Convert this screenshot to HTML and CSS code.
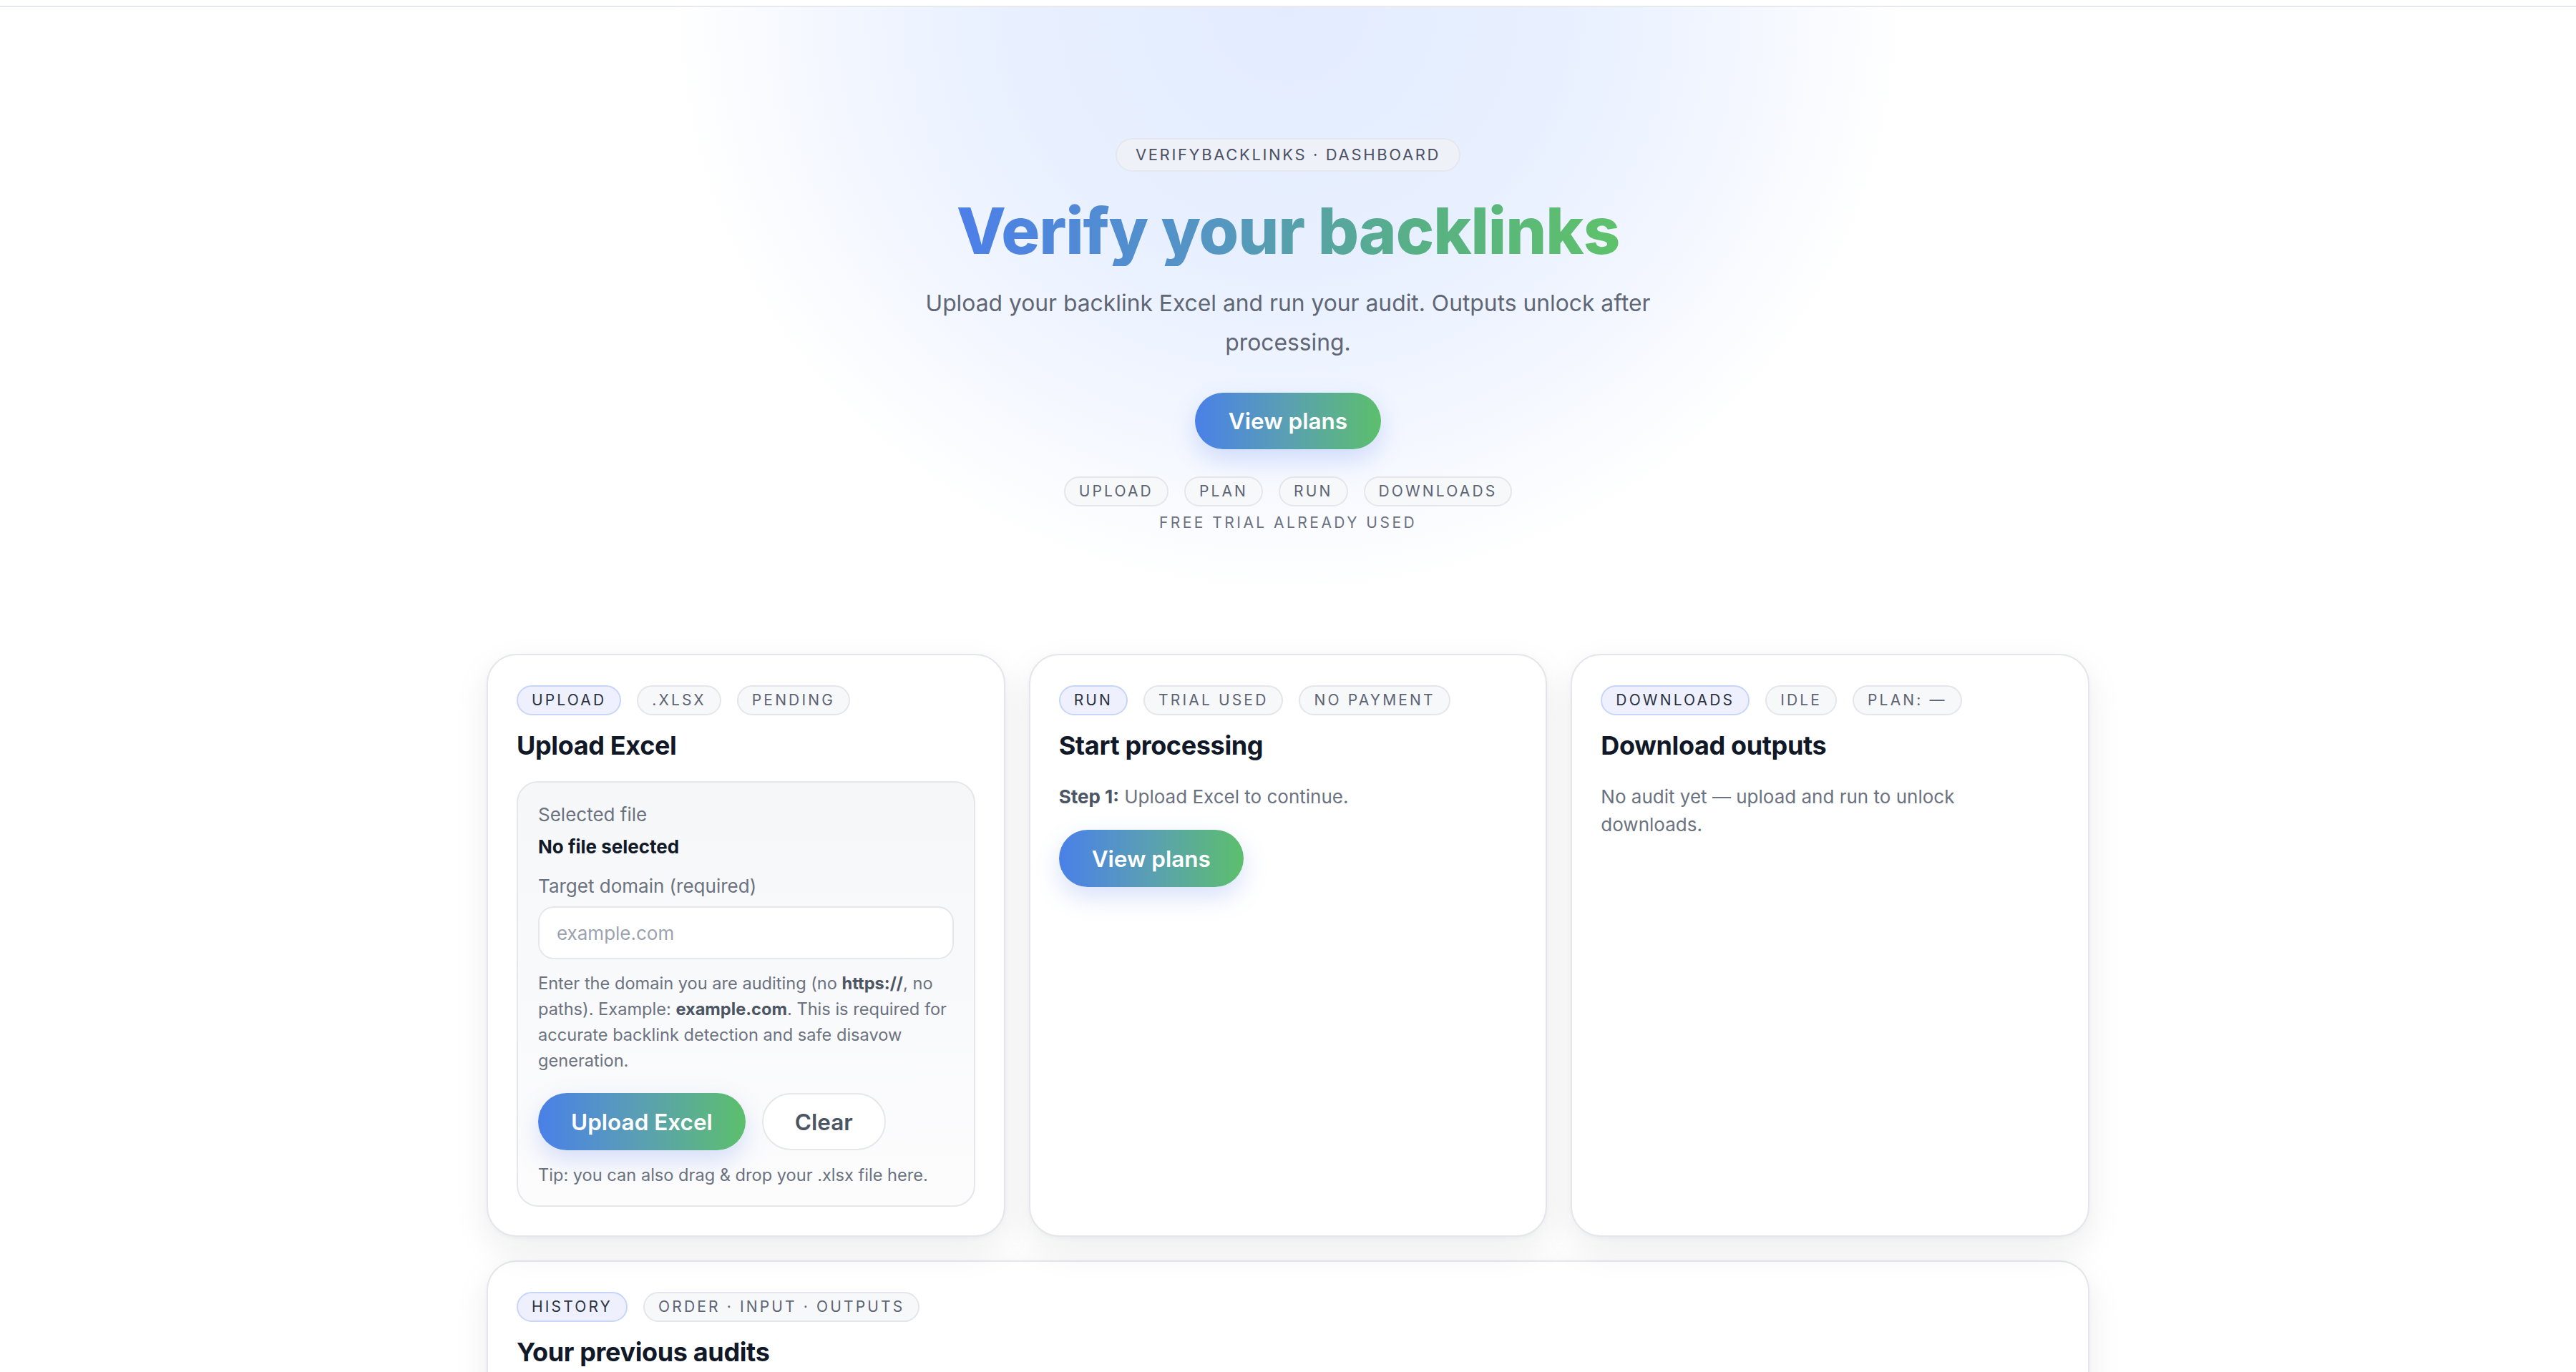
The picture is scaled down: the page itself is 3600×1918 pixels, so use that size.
FILE: index.html
```html
<!DOCTYPE html>
<html lang="en">
<head>
    <meta charset="UTF-8">
    <meta name="viewport" content="width=device-width, initial-scale=1.0">
    <title>VerifyBacklinks · Dashboard</title>
    <link rel="stylesheet" href="styles.css">
</head>
<body>
    <div class="topbar"></div>

    <section class="hero">
        <div class="eyebrow">VerifyBacklinks · Dashboard</div>
        <h1 class="hero-title">Verify your backlinks</h1>
        <p class="hero-sub">Upload your backlink Excel and run your audit. Outputs unlock after processing.</p>
        <a class="btn btn-primary" href="#plans">View plans</a>
        <div class="chips hero-chips">
            <span class="chip">Upload</span>
            <span class="chip">Plan</span>
            <span class="chip">Run</span>
            <span class="chip">Downloads</span>
        </div>
        <div class="trial-note">Free trial already used</div>
    </section>

    <main class="container">
        <div class="grid">
            <!-- Step 1 -->
            <div class="card">
                <div class="chips">
                    <span class="chip chip-active">Upload</span>
                    <span class="chip">.xlsx</span>
                    <span class="chip">Pending</span>
                </div>
                <h2 class="card-title">Upload Excel</h2>

                <div class="dropzone">
                    <div class="label">Selected file</div>
                    <div class="file-name">No file selected</div>

                    <label class="label field-label" for="domain">Target domain (required)</label>
                    <input class="input" id="domain" type="text" placeholder="example.com">

                    <p class="help">Enter the domain you are auditing (no <b>https://</b>, no paths). Example: <b>example.com</b>. This is required for accurate backlink detection and safe disavow generation.</p>

                    <div class="actions">
                        <button class="btn btn-primary">Upload Excel</button>
                        <button class="btn btn-ghost">Clear</button>
                    </div>

                    <p class="help tip">Tip: you can also drag &amp; drop your .xlsx file here.</p>
                </div>
            </div>

            <!-- Step 2 -->
            <div class="card">
                <div class="chips">
                    <span class="chip chip-active">Run</span>
                    <span class="chip">Trial used</span>
                    <span class="chip">No payment</span>
                </div>
                <h2 class="card-title">Start processing</h2>
                <p class="card-text"><b>Step 1:</b> Upload Excel to continue.</p>
                <div class="actions">
                    <a class="btn btn-primary" href="#plans">View plans</a>
                </div>
            </div>

            <!-- Step 3 -->
            <div class="card">
                <div class="chips">
                    <span class="chip chip-active">Downloads</span>
                    <span class="chip">Idle</span>
                    <span class="chip">Plan: —</span>
                </div>
                <h2 class="card-title">Download outputs</h2>
                <p class="card-text narrow">No audit yet — upload and run to unlock downloads.</p>
            </div>
        </div>

        <div class="card history">
            <div class="chips">
                <span class="chip chip-active">History</span>
                <span class="chip">Order · Input · Outputs</span>
            </div>
            <h2 class="card-title">Your previous audits</h2>
            <p class="card-text">No previous audits yet.</p>
        </div>
    </main>
</body>
</html>
```

FILE: styles.css
```css
* {
    box-sizing: border-box;
}
body {
    margin: 0;
    font-family: Inter, "Noto Sans", Arial, sans-serif;
    color: #111827;
    background-color: #ffffff;
}
.topbar {
    height: 10px;
    border-bottom: 2px solid #e6eaef;
}

/* hero */
.hero {
    display: flex;
    flex-direction: column;
    align-items: center;
    text-align: center;
    padding: 183px 20px 168px;
    background: radial-gradient(ellipse 860px 820px at 50% 0, #e3ecff 0%, #e8f0ff 45%, #f2f6ff 72%, rgba(255,255,255,0) 100%);
}
.eyebrow {
    height: 47px;
    line-height: 43px;
    padding: 0 26px;
    border: 2px solid #e6e7ee;
    border-radius: 999px;
    background-color: #eff1f8;
    color: #4b5162;
    font-size: 22px;
    letter-spacing: 0.12em;
    text-transform: uppercase;
}
.hero-title {
    margin: 33px 0 0;
    font-size: 90px;
    line-height: 99px;
    font-weight: 800;
    letter-spacing: -0.012em;
    background: linear-gradient(90deg, #4c7fe9 0%, #5597c0 40%, #58b184 70%, #5ec26a 100%);
    -webkit-background-clip: text;
    background-clip: text;
    color: transparent;
}
.hero-sub {
    max-width: 1080px;
    margin: 24px 0 0;
    font-size: 31.8px;
    line-height: 55px;
    color: #5f6675;
}
.hero .btn-primary {
    margin-top: 43px;
    height: 79px;
    padding: 0 47px;
}
.hero-chips {
    margin-top: 38px;
    justify-content: center;
}
.trial-note {
    margin-top: 7px;
    font-size: 21px;
    line-height: 31px;
    letter-spacing: 0.165em;
    text-transform: uppercase;
    color: #6b7080;
}

/* chips */
.chips {
    display: flex;
    gap: 22px;
}
.chip {
    height: 42px;
    line-height: 38px;
    padding: 0 19px;
    border: 2px solid #e4e6eb;
    border-radius: 999px;
    background-color: #f7f8fa;
    color: #5d6474;
    font-size: 21px;
    letter-spacing: 0.15em;
    text-transform: uppercase;
    white-space: nowrap;
}
.chip-active {
    background-color: #eef1fd;
    border-color: #c6d5f8;
    color: #2b3140;
}

/* buttons */
.btn {
    display: inline-flex;
    align-items: center;
    justify-content: center;
    height: 80px;
    padding: 0 46px;
    border-radius: 999px;
    border: none;
    font-family: inherit;
    font-size: 31.5px;
    font-weight: 600;
    text-decoration: none;
    cursor: pointer;
}
.btn-primary {
    color: #ffffff;
    background: linear-gradient(90deg, #4a80e8 0%, #5aa0b2 50%, #5cbf6c 100%);
    box-shadow: 0 14px 34px rgba(76, 118, 232, 0.22);
}
.btn-ghost {
    padding: 0 44px;
    color: #4b5563;
    background-color: #ffffff;
    border: 2px solid #e5e7eb;
}
.actions {
    display: flex;
    gap: 23px;
    margin-top: 24px;
}

/* layout */
.container {
    width: 2240px;
    margin: 0 auto;
    padding-bottom: 80px;
}
.grid {
    display: grid;
    grid-template-columns: repeat(3, 1fr);
    gap: 33px;
}
.card {
    padding: 42px 40px 40px;
    background-color: #ffffff;
    border: 2px solid #e4e6ec;
    border-radius: 42px;
    box-shadow: 0 18px 50px rgba(17, 24, 39, 0.08), 0 2px 6px rgba(17, 24, 39, 0.03);
}
.card-title {
    margin: 20px 0 0;
    font-size: 36px;
    line-height: 45px;
    font-weight: 700;
    letter-spacing: -0.01em;
    color: #111827;
}
.card-text {
    margin: 29px 0 0;
    font-size: 26px;
    line-height: 39px;
    color: #6b7280;
}
.card-text b {
    color: #4b5563;
}
.card-text.narrow {
    max-width: 560px;
}
.card .actions {
    margin-top: 27px;
}
.history {
    margin-top: 33px;
}

/* upload box */
.dropzone {
    margin-top: 27px;
    padding: 25px 28px 24px;
    border: 2px solid #e5e7eb;
    border-radius: 30px;
    background: linear-gradient(180deg, #f6f7f9 0%, #fcfcfd 100%);
}
.label {
    display: block;
    font-size: 26px;
    line-height: 39px;
    color: #6b7280;
}
.file-name {
    margin-top: 6px;
    font-size: 26px;
    line-height: 39px;
    font-weight: 700;
    color: #111827;
}
.field-label {
    margin-top: 16px;
}
.input {
    display: block;
    width: 100%;
    height: 74px;
    margin-top: 9px;
    padding: 0 24px;
    border: 2px solid #e5e7eb;
    border-radius: 22px;
    background-color: #ffffff;
    font-family: inherit;
    font-size: 26px;
    color: #111827;
}
.input::placeholder {
    color: #9ca3af;
}
.help {
    margin: 16px 0 0;
    font-size: 23.6px;
    line-height: 36px;
    color: #6b7280;
}
.help b {
    color: #4b5563;
}
.tip {
    margin-top: 17px;
}
```
